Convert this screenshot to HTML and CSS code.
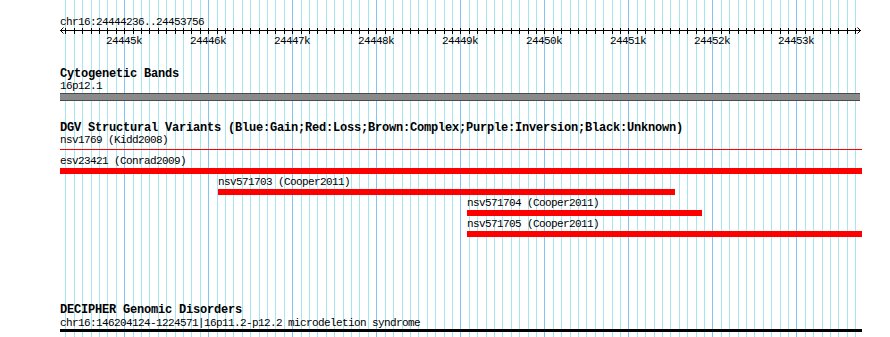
FILE: index.html
```html
<!DOCTYPE html>
<html lang="en">
<head>
    <meta charset="UTF-8">
    <title>chr16:24444236..24453756</title>
    <link rel="stylesheet" href="styles.css">
</head>
<body>
<div class="panel">
    <!-- grid lines, drawn by the script below -->
    <svg class="grid" id="grid" width="890" height="337"></svg>

    <div class="ruler">
        <div class="label ruler-title">chr16:24444236..24453756</div>
        <svg class="axis" id="axis" width="890" height="8">
            <rect x="60" y="3" width="801" height="1" fill="#000"/>
            <polyline points="63.5,0.5 60.5,3.5 63.5,6.5" fill="none" stroke="#000"/>
            <polyline points="857.5,0.5 860.5,3.5 857.5,6.5" fill="none" stroke="#000"/>
        </svg>
        <div class="ticks">
            <span>24445k</span>
            <span>24446k</span>
            <span>24447k</span>
            <span>24448k</span>
            <span>24449k</span>
            <span>24450k</span>
            <span>24451k</span>
            <span>24452k</span>
            <span>24453k</span>
        </div>
    </div>

    <div class="track track-cyto">
        <div class="track-title">Cytogenetic Bands</div>
        <div class="label">16p12.1</div>
        <div class="band"></div>
    </div>

    <div class="track track-dgv">
        <div class="track-title">DGV Structural Variants (Blue:Gain;Red:Loss;Brown:Complex;Purple:Inversion;Black:Unknown)</div>
        <div class="label">nsv1769 (Kidd2008)</div>
        <div class="sv-line"></div>

        <div class="features">
            <div class="feature">
                <div class="label">esv23421 (Conrad2009)</div>
                <div class="sv-bar" style="width: 802px"></div>
            </div>
            <div class="feature" style="margin-left: 158px">
                <div class="label">nsv571703 (Cooper2011)</div>
                <div class="sv-bar" style="width: 457px"></div>
            </div>
            <div class="feature" style="margin-left: 407px">
                <div class="label">nsv571704 (Cooper2011)</div>
                <div class="sv-bar" style="width: 235px"></div>
            </div>
            <div class="feature" style="margin-left: 407px">
                <div class="label">nsv571705 (Cooper2011)</div>
                <div class="sv-bar" style="width: 395px"></div>
            </div>
        </div>
    </div>

    <div class="track track-decipher">
        <div class="track-title">DECIPHER Genomic Disorders</div>
        <div class="label decipher-label">chr16:146204124-1224571|16p11.2-p12.2 microdeletion syndrome</div>
        <div class="decipher-bar"></div>
    </div>
</div>

<script>
    var start = 24444236, end = 24453756;
    var ns = 'http://www.w3.org/2000/svg';
    var grid = document.getElementById('grid');
    var axis = document.getElementById('axis');

    function px(p) {
        return Math.round(60 + (p - start) * 800 / (end - start));
    }

    for (var p = Math.ceil(start / 100) * 100; p <= end; p += 100) {
        var x = px(p);

        var line = document.createElementNS(ns, 'rect');
        line.setAttribute('x', x);
        line.setAttribute('y', 0);
        line.setAttribute('width', 1);
        line.setAttribute('height', 337);
        line.setAttribute('class', p % 1000 === 0 ? 'major' : 'minor');
        grid.appendChild(line);

        var tick = document.createElementNS(ns, 'rect');
        tick.setAttribute('x', x);
        tick.setAttribute('y', 1);
        tick.setAttribute('width', 1);
        tick.setAttribute('height', 6);
        axis.appendChild(tick);
    }
</script>
</body>
</html>
```

FILE: styles.css
```css
body {
    margin: 0;
    background-color: #fff;
}

.panel {
    position: relative;
    width: 890px;
    height: 337px;
    overflow: hidden;
    font-family: "Liberation Mono", "DejaVu Sans Mono", monospace;
    color: #000;
}

.grid {
    position: absolute;
    left: 0;
    top: 0;
}

.grid .minor {
    fill: #a6e6f0;
}

.grid .major {
    fill: #80c6ee;
}

.label {
    font-size: 11px;
    letter-spacing: -0.6px;
    line-height: 12px;
    height: 12px;
    white-space: nowrap;
}

.track-title {
    font-size: 12px;
    font-weight: bold;
    letter-spacing: -0.2px;
    line-height: 11px;
    height: 11px;
    white-space: nowrap;
}

/* ruler */
.ruler {
    position: relative;
    padding-top: 16px;
}

.ruler-title {
    padding-left: 60px;
}

.axis {
    display: block;
    margin-top: -1px;
}

.axis rect {
    fill: #000;
}

.ticks {
    display: flex;
    padding-left: 82px;
    font-size: 11px;
    letter-spacing: -0.6px;
    line-height: 12px;
}

.ticks span {
    width: 84px;
    text-align: center;
}

/* tracks */
.track {
    position: relative;
    padding-left: 60px;
}

.track-cyto {
    margin-top: 22px;
}

.band {
    width: 800px;
    height: 6px;
    margin-top: 1px;
    background-color: #8a8a8a;
    border-top: 1px solid #4a4a4a;
    border-bottom: 1px solid #4a4a4a;
}

.track-dgv {
    margin-top: 22px;
}

.sv-line {
    width: 802px;
    height: 1px;
    margin-top: 3px;
    background-color: #f00;
}

.features {
    display: flex;
    flex-direction: column;
    gap: 2px;
    padding-top: 5px;
}

.sv-bar {
    height: 6px;
    margin-top: 1px;
    background-color: #f00;
}

.track-decipher {
    margin-top: 68px;
}

.decipher-label {
    margin-top: 1px;
}

.decipher-bar {
    width: 802px;
    height: 3px;
    background-color: #000;
}
```
